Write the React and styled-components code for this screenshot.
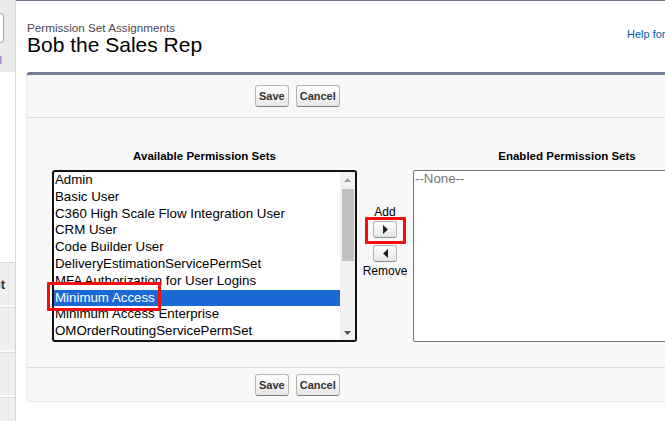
import React from 'react';
import styled, { createGlobalStyle } from 'styled-components';

const GlobalStyle = createGlobalStyle`
  html, body {
    margin: 0;
    padding: 0;
    background: #fff;
    font-family: Arial, "Liberation Sans", Helvetica, sans-serif;
    color: #000;
  }
`;

const Page = styled.div`
  display: flex;
  width: 665px;
  height: 421px;
  overflow: hidden;
`;

const Sidebar = styled.div`
  flex: 0 0 15px;
  width: 15px;
  min-width: 0;
  overflow: hidden;
  display: flex;
  flex-direction: column;
  background: #e9e9e9;
  border-right: 1px solid #d6d6d6;

  & > * {
    flex-shrink: 0;
  }
`;

const SideTop = styled.div`
  height: 72px;
  padding-top: 13px;
  box-sizing: border-box;
`;

const SearchStub = styled.div`
  width: 3px;
  height: 28px;
  background: #fff;
  border: 1px solid #a8a8a8;
  border-left: none;
  border-radius: 0 4px 4px 0;
`;

const SideLink = styled.div`
  display: flex;
  justify-content: flex-end;
  overflow: hidden;
  white-space: nowrap;
  margin-top: 11px;
  padding-right: 13px;
  font-size: 11px;
  line-height: 12px;
  color: #5b6fd0;
`;

const SideCard = styled.div`
  height: 190px;
  background: #fff;
`;

const SideTab = styled.div`
  height: 42px;
  display: flex;
  align-items: center;
  justify-content: flex-end;
  overflow: hidden;
  white-space: nowrap;
  padding-right: 10px;
  background: #efefef;
  border-top: 1px solid #dcdcdc;
  border-bottom: 2px solid #fafafa;
  font-size: 13px;
  font-weight: bold;
  color: #333;
`;

const Main = styled.div`
  flex: 0 0 760px;
  border-top: 1px solid #6f7689;
`;

const Header = styled.div`
  display: flex;
  justify-content: space-between;
  height: 71px;
  padding: 20px 0 0 11px;
  box-sizing: border-box;
`;

const TitleBlock = styled.div`
  display: flex;
  flex-direction: column;
`;

const PageType = styled.div`
  font-size: 11.7px;
  line-height: 13px;
  color: #4a4a56;
`;

const PageName = styled.h1`
  margin: 0;
  font-size: 21px;
  line-height: 22px;
  font-weight: normal;
  color: #000;
`;

const HelpLink = styled.a`
  width: 149px;
  margin-top: 7px;
  font-size: 11px;
  line-height: 13px;
  color: #015ba7;
  white-space: nowrap;
  overflow: hidden;
  text-decoration: none;
`;

const Panel = styled.div`
  margin-left: 10px;
  background: #f8f8f8;
  border: 1px solid #eaeaea;
  border-top: 3px solid #747d94;
  border-radius: 4px;
`;

const ButtonRow = styled.div`
  display: flex;
  gap: 7px;
  padding: ${p => (p.$bottom ? '6px 0 5px 228px' : '10px 0 10px 228px')};
  border-${p => (p.$bottom ? 'top' : 'bottom')}: 1px solid #dbdbdb;
`;

const Btn = styled.button`
  margin: 0;
  padding: 4px 3px;
  font-family: Arial, "Liberation Sans", sans-serif;
  font-size: 11px;
  font-weight: bold;
  line-height: 12px;
  color: #333;
  background: linear-gradient(#ffffff, #f4f4f4 50%, #e7e7e7);
  border: 1px solid #b5b5b5;
  border-bottom-color: #7f7f7f;
  border-radius: 3px;
`;

const Body = styled.div`
  display: grid;
  grid-template-columns: 305px 56px 308px;
  padding: 31px 0 25px 25px;
`;

const Column = styled.div`
  display: flex;
  flex-direction: column;
  align-items: center;
`;

const ColLabel = styled.div`
  font-size: 11.5px;
  font-weight: bold;
  line-height: 14px;
  color: #000;
  margin-bottom: 7px;
`;

const ListBox = styled.div`
  display: flex;
  align-self: stretch;
  height: 172px;
  box-sizing: border-box;
  background: #fff;
  border: ${p => (p.$focused ? '2px solid #111' : '1px solid #767676')};
  border-radius: ${p => (p.$focused ? '3px' : '2px')};
`;

const Items = styled.div`
  flex: 1;
  min-width: 0;
  display: flex;
  flex-direction: column;
`;

const Item = styled.div`
  position: relative;
  height: 17px;
  padding-left: 1px;
  font-size: 13.3px;
  line-height: 15px;
  white-space: nowrap;
  color: ${p => (p.$selected ? '#fff' : p.$muted ? '#757575' : '#000')};
  background: ${p => (p.$selected ? '#1b69d4' : 'transparent')};
`;

const Scrollbar = styled.div`
  flex: 0 0 15px;
  display: flex;
  flex-direction: column;
  align-items: center;
  background: #f1f1f1;
`;

const ScrollArrow = styled.div`
  height: 15px;
  display: flex;
  align-items: center;
  justify-content: center;
`;

const ScrollThumb = styled.div`
  width: 12px;
  height: 72px;
  margin-top: 2px;
  background: #c1c1c1;
`;

const ScrollTrack = styled.div`
  flex: 1;
`;

const Mover = styled.div`
  display: flex;
  flex-direction: column;
  align-items: center;
  padding-top: 56px;
  font-size: 12px;
  line-height: 14px;
  color: #000;
`;

const MoverLabel = styled.span`
  margin-top: ${p => p.$gap || 0}px;
`;

const ArrowBtn = styled.div`
  position: relative;
  width: 24px;
  height: 17px;
  box-sizing: border-box;
  display: flex;
  align-items: center;
  justify-content: center;
  margin-top: ${p => p.$gap || 0}px;
  background: linear-gradient(#ffffff, #f2f2f2 50%, #e6e6e6);
  border: 1px solid #b5b5b5;
  border-bottom-color: #8c8c8c;
  border-radius: 3px;
`;

const Highlight = styled.div`
  position: absolute;
  left: ${p => p.$left}px;
  top: ${p => p.$top}px;
  width: ${p => p.$w}px;
  height: ${p => p.$h}px;
  box-sizing: border-box;
  border: 3px solid #f20f0f;
  border-radius: 1px;
  pointer-events: none;
  z-index: 2;
`;

const available = [
  'Admin',
  'Basic User',
  'C360 High Scale Flow Integration User',
  'CRM User',
  'Code Builder User',
  'DeliveryEstimationServicePermSet',
  'MFA Authorization for User Logins',
  'Minimum Access',
  'Minimum Access Enterprise',
  'OMOrderRoutingServicePermSet',
];

const Triangle = ({ dir, w = 5, h = 9, color = '#222' }) => (
  <svg width={w} height={h} viewBox={`0 0 ${w} ${h}`}>
    {dir === 'right' && <polygon points={`0,0 ${w},${h / 2} 0,${h}`} fill={color} />}
    {dir === 'left' && <polygon points={`${w},0 0,${h / 2} ${w},${h}`} fill={color} />}
    {dir === 'up' && <polygon points={`0,${h} ${w / 2},0 ${w},${h}`} fill={color} />}
    {dir === 'down' && <polygon points={`0,0 ${w / 2},${h} ${w},0`} fill={color} />}
  </svg>
);

function App() {
  return (
    <Page>
      <GlobalStyle />
      <Sidebar>
        <SideTop>
          <SearchStub />
          <SideLink>View All</SideLink>
        </SideTop>
        <SideCard />
        <SideTab>Account</SideTab>
        <SideTab />
        <SideTab />
        <SideTab />
      </Sidebar>

      <Main>
        <Header>
          <TitleBlock>
            <PageType>Permission Set Assignments</PageType>
            <PageName>Bob the Sales Rep</PageName>
          </TitleBlock>
          <HelpLink href="#">Help for this Page</HelpLink>
        </Header>

        <Panel>
          <ButtonRow>
            <Btn>Save</Btn>
            <Btn>Cancel</Btn>
          </ButtonRow>

          <Body>
            <Column>
              <ColLabel>Available Permission Sets</ColLabel>
              <ListBox $focused>
                <Items>
                  {available.map(name => (
                    <Item key={name} $selected={name === 'Minimum Access'}>
                      {name}
                      {name === 'Minimum Access' && (
                        <Highlight $left={-7} $top={-8} $w={114} $h={29} />
                      )}
                    </Item>
                  ))}
                </Items>
                <Scrollbar>
                  <ScrollArrow><Triangle dir="up" w={7} h={4} color="#a3a3a3" /></ScrollArrow>
                  <ScrollThumb />
                  <ScrollTrack />
                  <ScrollArrow><Triangle dir="down" w={7} h={4} color="#505050" /></ScrollArrow>
                </Scrollbar>
              </ListBox>
            </Column>

            <Mover>
              <MoverLabel>Add</MoverLabel>
              <ArrowBtn $gap={2}>
                <Triangle dir="right" />
                <Highlight $left={-9} $top={-5} $w={41} $h={27} />
              </ArrowBtn>
              <ArrowBtn $gap={7}>
                <Triangle dir="left" />
              </ArrowBtn>
              <MoverLabel $gap={2}>Remove</MoverLabel>
            </Mover>

            <Column>
              <ColLabel>Enabled Permission Sets</ColLabel>
              <ListBox>
                <Items>
                  <Item $muted>--None--</Item>
                </Items>
              </ListBox>
            </Column>
          </Body>

          <ButtonRow $bottom>
            <Btn>Save</Btn>
            <Btn>Cancel</Btn>
          </ButtonRow>
        </Panel>
      </Main>
    </Page>
  );
}

export default App;
